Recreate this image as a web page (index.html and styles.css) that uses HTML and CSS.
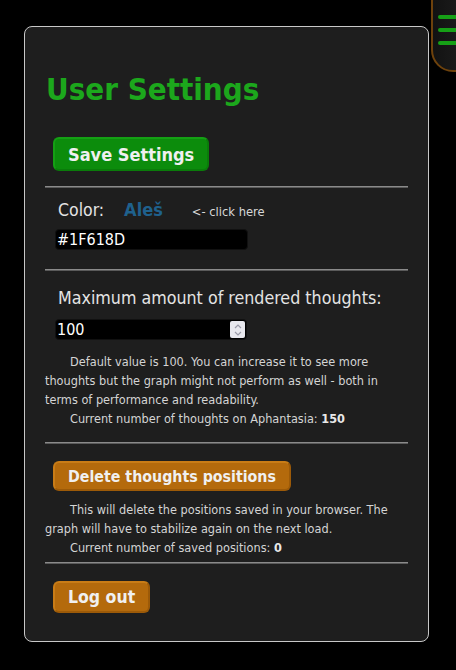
FILE: index.html
```html
<!DOCTYPE html>
<html>
<head>
<meta charset="utf-8">
<link rel="stylesheet" href="styles.css">
</head>
<body>
<div class="menu-btn">
  <span class="bar"></span>
  <span class="bar"></span>
  <span class="bar"></span>
</div>
<main class="panel">
  <h1 class="title">User Settings</h1>
  <div class="row-btn">
    <button class="btn btn-green">Save Settings</button>
  </div>
  <hr class="sep">
  <section class="color-sec">
    <div class="color-row">
      <span class="label">Color:</span>
      <span class="name">Aleš</span>
      <span class="hint">&lt;- click here</span>
    </div>
    <input class="field" type="text" value="#1F618D">
  </section>
  <hr class="sep">
  <section class="max-sec">
    <div class="label big">Maximum amount of rendered thoughts:</div>
    <div class="num-wrap">
      <input class="field num" type="text" value="100">
      <span class="spin">
        <svg width="10" height="14" viewBox="0 0 10 14"><path d="M2 5 L5 2 L8 5" fill="none" stroke="#9a9aa8" stroke-width="1.2"/><path d="M2 9 L5 12 L8 9" fill="none" stroke="#9a9aa8" stroke-width="1.2"/></svg>
      </span>
    </div>
    <p class="note first">Default value is 100. You can increase it to see more thoughts but the graph might not perform as well - both in terms of performance and readability.</p>
    <p class="note">Current number of thoughts on Aphantasia: <b>150</b></p>
  </section>
  <hr class="sep">
  <section class="del-sec">
    <button class="btn btn-orange btn-del">Delete thoughts positions</button>
    <p class="note first">This will delete the positions saved in your browser. The graph will have to stabilize again on the next load.</p>
    <p class="note">Current number of saved positions: <b>0</b></p>
  </section>
  <hr class="sep">
  <div class="row-btn last">
    <button class="btn btn-orange btn-logout">Log out</button>
  </div>
</main>
</body>
</html>
```

FILE: styles.css
```css
html, body {
  margin: 0;
  padding: 0;
  background: #000;
}
body {
  font-family: "DejaVu Sans Condensed", "DejaVu Sans", sans-serif;
  font-stretch: condensed;
  color: #e2e2e2;
  width: 456px;
  height: 670px;
  overflow: hidden;
  position: relative;
}
.menu-btn {
  position: absolute;
  top: -10px;
  left: 431px;
  width: 40px;
  height: 82px;
  box-sizing: border-box;
  border: 2px solid #6e420c;
  border-radius: 0 0 0 22px;
  background: linear-gradient(90deg, #121212, #1e1e1e);
  display: flex;
  flex-direction: column;
  gap: 9px;
  padding: 23px 0 0 5px;
}
.menu-btn .bar {
  display: block;
  height: 4px;
  width: 40px;
  background: #16a016;
  border-radius: 2px;
}
.panel {
  box-sizing: border-box;
  width: 405px;
  height: 616px;
  margin: 26px 0 0 24px;
  background: #1e1e1e;
  border: 1px solid #c8c8c8;
  border-radius: 8px;
  padding: 40px 20px 0 20px;
}
.title {
  margin: 0 0 0 1px;
  font-size: 31px;
  line-height: 44px;
  font-weight: bold;
  color: #1ca71c;
}
.row-btn {
  padding: 26px 0 15px 8px;
}
.row-btn.last {
  padding-top: 17px;
}
.btn {
  font-family: "DejaVu Sans Condensed", "DejaVu Sans", sans-serif;
  font-stretch: condensed;
  font-weight: bold;
  color: #f0f0f0;
  font-size: 16px;
  border-radius: 6px;
  padding: 0 13px;
  cursor: pointer;
}
.btn-green {
  background: #0c8c0c;
  border: 2px solid #0a7c0a;
  border-top-color: #14a014;
  border-left-color: #14a014;
  height: 34px;
  font-size: 18px;
}
.btn-orange {
  background: #b46a0c;
  border: 2px solid #9c5a08;
  border-top-color: #c97c16;
  border-left-color: #c97c16;
  height: 30px;
}
.btn-del {
  font-size: 15.8px;
}
.btn-logout {
  height: 32px;
  font-size: 17.5px;
}
.sep {
  margin: 0;
  height: 0;
  border: 0;
  border-top: 1px solid #8a8a8a;
  border-bottom: 1px solid #5a5a5a;
}
.color-sec {
  padding: 11px 0 19px 10px;
}
.color-row {
  display: flex;
  align-items: baseline;
  height: 22px;
  padding-left: 3px;
}
.label {
  font-size: 17.5px;
  color: #e4e4e4;
}
.name {
  margin-left: 20px;
  font-weight: bold;
  font-size: 18px;
  color: #1f618d;
}
.hint {
  margin-left: 29px;
  font-size: 12.8px;
  color: #d8d8d8;
}
.field {
  display: block;
  box-sizing: border-box;
  margin-top: 8px;
  width: 193px;
  height: 21px;
  background: #000;
  border: 1px solid #111;
  border-radius: 4px;
  color: #fff;
  font-family: "DejaVu Sans Condensed", "DejaVu Sans", sans-serif;
  font-stretch: condensed;
  font-size: 16px;
  padding: 0 1px;
  outline: none;
}
.max-sec {
  padding: 16px 0 14px 0;
}
.max-sec .big {
  font-size: 17.7px;
  padding-left: 13px;
  line-height: 22px;
}
.num-wrap {
  position: relative;
  width: 192px;
  margin: 10px 0 0 10px;
}
.num-wrap .num {
  margin: 0;
  width: 192px;
}
.spin {
  position: absolute;
  right: 2px;
  top: 2px;
  width: 15px;
  height: 17px;
  background: #e8e8ee;
  border-radius: 2px;
  display: flex;
  align-items: center;
  justify-content: center;
}
.note {
  margin: 0;
  font-size: 12.6px;
  line-height: 19px;
  color: #d4d4d4;
  text-indent: 25px;
}
.max-sec .note.first {
  margin-top: 12px;
}
.note b {
  color: #e8e8e8;
}
.del-sec {
  padding: 17px 0 5px 8px;
}
.del-sec .note {
  margin-left: -8px;
}
.del-sec .note.first {
  margin-top: 9px;
}
```
